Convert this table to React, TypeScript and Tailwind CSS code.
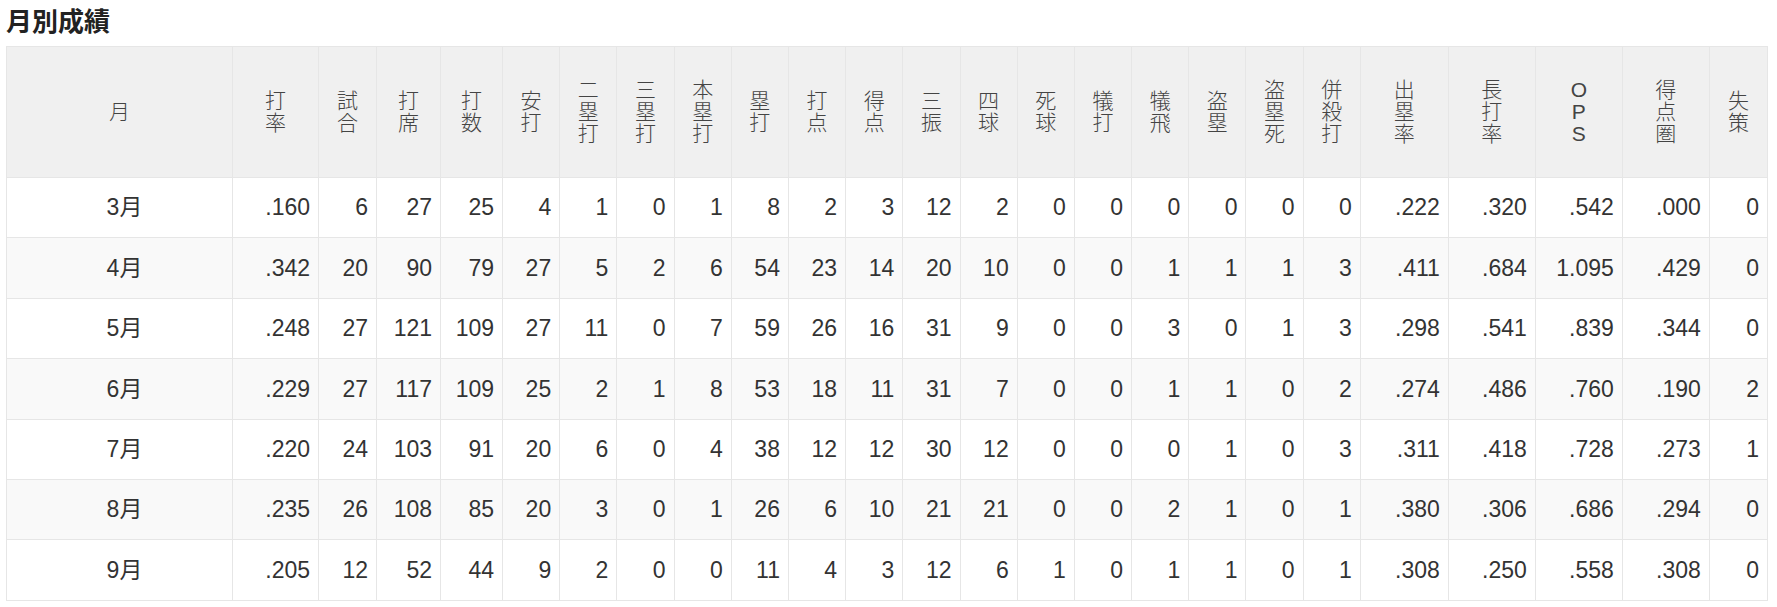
const headers: { label: string; width: string }[] = [
  { label: '打率', width: 'w-[86px]' },
  { label: '試合', width: 'w-[58px]' },
  { label: '打席', width: 'w-[64px]' },
  { label: '打数', width: 'w-[62px]' },
  { label: '安打', width: 'w-[57.2px]' },
  { label: '二塁打', width: 'w-[57.2px]' },
  { label: '三塁打', width: 'w-[57.2px]' },
  { label: '本塁打', width: 'w-[57.2px]' },
  { label: '塁打', width: 'w-[57.2px]' },
  { label: '打点', width: 'w-[57.2px]' },
  { label: '得点', width: 'w-[57.2px]' },
  { label: '三振', width: 'w-[57.2px]' },
  { label: '四球', width: 'w-[57.2px]' },
  { label: '死球', width: 'w-[57.2px]' },
  { label: '犠打', width: 'w-[57.2px]' },
  { label: '犠飛', width: 'w-[57.2px]' },
  { label: '盗塁', width: 'w-[57.2px]' },
  { label: '盗塁死', width: 'w-[57.2px]' },
  { label: '併殺打', width: 'w-[57.2px]' },
  { label: '出塁率', width: 'w-[88px]' },
  { label: '長打率', width: 'w-[87px]' },
  { label: 'OPS', width: 'w-[87px]' },
  { label: '得点圏', width: 'w-[87px]' },
  { label: '失策', width: 'w-[58px]' },
];

const rows: { month: string; stats: string[] }[] = [
  { month: '3月', stats: ['.160', '6', '27', '25', '4', '1', '0', '1', '8', '2', '3', '12', '2', '0', '0', '0', '0', '0', '0', '.222', '.320', '.542', '.000', '0'] },
  { month: '4月', stats: ['.342', '20', '90', '79', '27', '5', '2', '6', '54', '23', '14', '20', '10', '0', '0', '1', '1', '1', '3', '.411', '.684', '1.095', '.429', '0'] },
  { month: '5月', stats: ['.248', '27', '121', '109', '27', '11', '0', '7', '59', '26', '16', '31', '9', '0', '0', '3', '0', '1', '3', '.298', '.541', '.839', '.344', '0'] },
  { month: '6月', stats: ['.229', '27', '117', '109', '25', '2', '1', '8', '53', '18', '11', '31', '7', '0', '0', '1', '1', '0', '2', '.274', '.486', '.760', '.190', '2'] },
  { month: '7月', stats: ['.220', '24', '103', '91', '20', '6', '0', '4', '38', '12', '12', '30', '12', '0', '0', '0', '1', '0', '3', '.311', '.418', '.728', '.273', '1'] },
  { month: '8月', stats: ['.235', '26', '108', '85', '20', '3', '0', '1', '26', '6', '10', '21', '21', '0', '0', '2', '1', '0', '1', '.380', '.306', '.686', '.294', '0'] },
  { month: '9月', stats: ['.205', '12', '52', '44', '9', '2', '0', '0', '11', '4', '3', '12', '6', '1', '0', '1', '1', '0', '1', '.308', '.250', '.558', '.308', '0'] },
];

export default function App() {
  return (
    <div className="min-h-screen bg-white pl-[6px] font-['Liberation_Sans','Noto_Sans_CJK_JP',sans-serif] text-[#333]">
      {/* Title */}
      <h2 className="h-[46px] pt-[7px] text-[26px] font-bold leading-[30px] text-[#222]">
        月別成績
      </h2>

      <table className="w-[1762px] table-fixed border-collapse">
        <thead>
          <tr className="h-[131px] bg-[#f0f0f0]">
            <th className="w-[226px] border border-[#e6e6e6] text-[21px] font-light leading-[22px] text-[#444]">
              月
            </th>
            {headers.map((h) => (
              <th
                key={h.label}
                className={`${h.width} border border-[#e6e6e6] text-center text-[21px] font-light leading-[22px] text-[#444]`}
              >
                {h.label.split('').map((ch, i) => (
                  <span key={i} className="block">
                    {ch}
                  </span>
                ))}
              </th>
            ))}
          </tr>
        </thead>
        <tbody>
          {rows.map((row, idx) => (
            <tr
              key={row.month}
              className={idx % 2 === 1 ? 'h-[60.4px] bg-[#f9f9f9]' : 'h-[60.4px] bg-white'}
            >
              <td className="border border-[#e6e6e6] pl-[10px] text-center text-[23px]">
                {row.month}
              </td>
              {row.stats.map((v, i) => (
                <td
                  key={i}
                  className="border border-[#e6e6e6] pr-[8px] text-right text-[23px]"
                >
                  {v}
                </td>
              ))}
            </tr>
          ))}
        </tbody>
      </table>
    </div>
  );
}
